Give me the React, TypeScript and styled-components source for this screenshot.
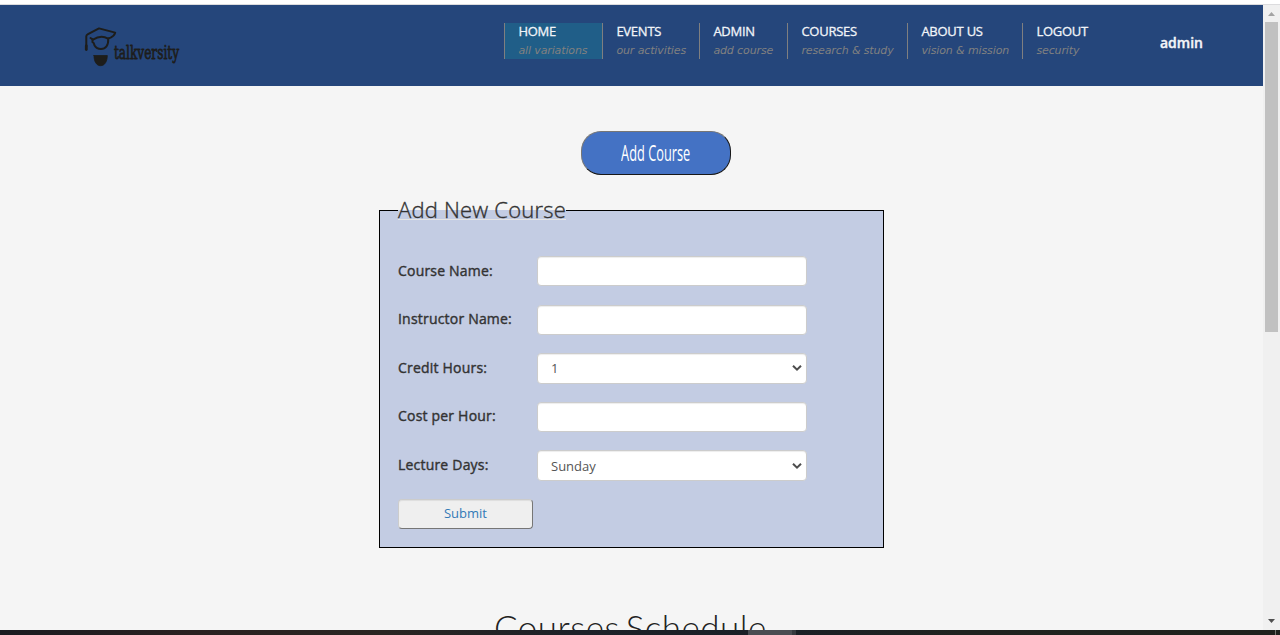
import React from "react";
import styled, { createGlobalStyle, css } from "styled-components";

const Global = createGlobalStyle`
  *, *::before, *::after { box-sizing: border-box; }
  body { margin: 0; overflow: hidden; background: #f5f5f5; font-family: "Open Sans", "Liberation Sans", sans-serif; }
`;

const Screen = styled.div`
  width: 1280px; height: 635px; overflow: hidden; display: flex; flex-direction: column;
`;
const BrowserEdge = styled.div`
  height: 5px; flex: none; background: #fff; border-bottom: 1px solid #dcdcde;
`;
const Viewport = styled.div`
  flex: none; height: 625px; display: flex; overflow: hidden;
`;
const Page = styled.div`
  width: 1263px; height: 625px; overflow: hidden; background: #f5f5f5;
`;
const Header = styled.header`
  height: 81px; background: #25467b; display: flex; align-items: flex-start; padding-left: 80px;
`;
const Logo = styled.svg`
  display: block; width: 104px; height: 50px; margin-top: 18px; flex: none; overflow: visible;
`;
const Nav = styled.nav`
  display: flex; margin: 18px 0 0 320px; height: 36px;
`;
const NavItem = styled.a<{ $width: number; $active?: boolean; $last?: boolean }>`
  width: ${(p) => p.$width}px; height: 36px; padding-left: 13px; white-space: nowrap;
  border-right: ${(p) => (p.$last ? "0" : "1px solid #7f7f80")};
  ${(p) => p.$active && css`background: #205e88; border-left: 1px solid #7f7f80;`}
`;
const NavTitle = styled.span`
  display: block; font-size: 13px; line-height: 16px; height: 18px; color: #f1f4f8;
  letter-spacing: -0.25px; -webkit-text-stroke: 0.3px #f1f4f8; padding-left: 0.4px;
`;
const NavHint = styled.span`
  display: block; font: italic 11px/18px "DejaVu Sans", sans-serif; color: #808080;
  letter-spacing: -0.12px; padding: 0.5px 0 0 0.4px;
`;
const UserName = styled.span`
  margin: 28px 0 0 38px; font-size: 14px; line-height: 20px; color: #f3f5f8; font-weight: 600;
  -webkit-text-stroke: 0.4px #f3f5f8;
`;
const Main = styled.main`
  display: flex; flex-direction: column;
`;
const AddButton = styled.button`
  width: 150px; height: 44px; margin: 45px 0 0 581px; padding: 0; border-radius: 20px;
  background: #4472c4; border: 1px solid; border-color: #767676 #171717 #171717 #767676;
  color: #fff; font: 400 18px/42px "Open Sans", sans-serif; white-space: nowrap;
  display: flex; align-items: center; justify-content: center;
`;
const Condensed = styled.span`
  display: block; flex: none; transform: scale(0.71, 1.16);
`;
const CourseForm = styled.form`
  width: 505px; height: 338px; margin: 35px 0 0 379px; border: 1px solid #000;
  background: #c3cce3; padding: 0 18px;
`;
const Legend = styled.h2`
  width: 168px; height: 24px; margin: -15px 0 0; border-bottom: 1px solid #e5e5e5;
  font-weight: 300; font-size: 22px; line-height: 26px; color: #333; white-space: nowrap;
  letter-spacing: 0.2px; -webkit-text-stroke: 0.35px #333;
  background: linear-gradient(#f5f5f5 0 14px, #c3cce3 14px);
`;
const Fields = styled.div`
  display: flex; flex-direction: column; gap: 18.2px; margin-top: 36px;
`;
const Field = styled.label`
  display: grid; grid-template-columns: 139px 270px; height: 30.4px; align-items: center;
`;
const Caption = styled.span`
  font-size: 14px; line-height: 20px; margin-top: -1.4px; color: #333; letter-spacing: 0.2px;
  -webkit-text-stroke: 0.4px #333; white-space: nowrap;
`;
const control = css`
  width: 270px; height: 30.4px; border: 1px solid #ccc; border-radius: 4px; background: #fff;
  box-shadow: inset 0 1px 1px rgba(0, 0, 0, 0.075);
`;
const TextInput = styled.input`${control} padding: 0 12px;`;
const SelectBox = styled.span`
  ${control}
  display: flex; align-items: center; justify-content: space-between; padding: 0 4px 0 13px;
  font-size: 13px; color: #555;
`;
const Submit = styled.button`
  width: 135px; height: 30px; margin-top: 18.6px; padding: 0 0 2px; border-radius: 4px;
  border: 1px solid; border-color: #ccc #767676 #767676 #ccc; background: #efefef;
  box-shadow: inset 0 1px 1px rgba(0, 0, 0, 0.075);
  color: #337ab7; font: 13px/20px "Open Sans", sans-serif;
`;
const Schedule = styled.h1`
  margin: 58px 0 0 494px; font: 300 35px/42px Lato, sans-serif; color: #222;
  letter-spacing: 0.5px; word-spacing: -4px; white-space: nowrap;
`;
const ScrollTrack = styled.div`
  width: 17px; height: 625px; background: #f0f0f0; display: flex; flex-direction: column; align-items: center;
`;
const ScrollThumb = styled.div`
  width: 13px; height: 310px; background: #c1c1c1; margin-left: -1px;
`;
const Arrow = styled.svg`
  display: block; width: 17px; height: 17px; flex: none;
`;
const Spacer = styled.div`flex: 1;`;
const Taskbar = styled.div`
  height: 5px; flex: none; display: flex; justify-content: flex-end;
  background: linear-gradient(90deg, #1a1b20 0, #2a2020 15%, #2a2522 30%, #1d2128 45%, #1a1f26 60%, #20221f 75%, #20211d 100%);
`;
const TaskTile = styled.div`width: 44px; height: 5px; background: #4a4d52;`;
const TaskEdge = styled.div`width: 4px; height: 5px; margin-right: 479px; background: #36393e;`;
const DesktopEdge = styled.div`width: 1px; height: 5px; margin-right: 4px; background: #75756f;`;

const navItems = [
  { title: "HOME", hint: "all variations", width: 99 },
  { title: "EVENTS", hint: "our activities", width: 97 },
  { title: "ADMIN", hint: "add course", width: 88 },
  { title: "COURSES", hint: "research & study", width: 120 },
  { title: "ABOUT US", hint: "vision & mission", width: 115 },
  { title: "LOGOUT", hint: "security", width: 99 },
];

const fields = [
  { label: "Course Name:" },
  { label: "Instructor Name:" },
  { label: "Credit Hours:", value: "1" },
  { label: "Cost per Hour:" },
  { label: "Lecture Days:", value: "Sunday" },
];

const Chevron = () => (
  <svg width="10" height="8" viewBox="0 0 10 8" fill="none" stroke="#4d4d4d" strokeWidth="2">
    <path d="M1 1.7 5 5.7 9 1.7" />
  </svg>
);

export default function App() {
  return (
    <Screen>
      <Global />
      <BrowserEdge />
      <Viewport>
        <Page>
          <Header>
            <Logo viewBox="80 23 104 50" fill="none" stroke="#1d1d1b" strokeWidth="2" strokeLinejoin="round" strokeLinecap="round">
              <path d="M86.3 46V36.2Q86.5 35 88 34.2L99 28.4 115.2 32.6Q114.5 35.8 110.6 37.6L108 38.6Q101 34.5 93 39.6L90.5 38" />
              <path d="M92.5 39.6V42.2C94.3 43 94 44.2 94.6 45.5 96 48 98 48.9 101 48.9 105.5 48.9 108.7 45.4 108.2 38.6" />
              <path d="M86.3 46v3.5" strokeWidth="2.8" />
              <path d="M94 55.5h13.3c0 5.5-2.4 10.2-6.7 10.2s-6.7-4.7-6.6-10.2z" fill="#1d1d1b" strokeWidth="0.8" />
              <text x="114" y="59.3" textLength="65" lengthAdjust="spacingAndGlyphs" fill="#1d1d1b" strokeWidth="0.8" fontFamily="DejaVu Serif, serif" fontSize="18.5">talkversity</text>
            </Logo>
            <Nav>
              {navItems.map((n, i) => (
                <NavItem key={n.title} $width={n.width} $active={i === 0} $last={i === navItems.length - 1}>
                  <NavTitle>{n.title}</NavTitle>
                  <NavHint>{n.hint}</NavHint>
                </NavItem>
              ))}
            </Nav>
            <UserName>admin</UserName>
          </Header>
          <Main>
            <AddButton><Condensed>Add Course</Condensed></AddButton>
            <CourseForm>
              <Legend>Add New Course</Legend>
              <Fields>
                {fields.map((f) => (
                  <Field key={f.label}>
                    <Caption>{f.label}</Caption>
                    {f.value ? <SelectBox>{f.value}<Chevron /></SelectBox> : <TextInput />}
                  </Field>
                ))}
              </Fields>
              <Submit type="button">Submit</Submit>
            </CourseForm>
            <Schedule>Courses Schedule</Schedule>
          </Main>
        </Page>
        <ScrollTrack>
          <Arrow viewBox="0 0 17 17"><path d="M5 11h7L8.5 7z" fill="#a3a3a3" /></Arrow>
          <ScrollThumb />
          <Spacer />
          <Arrow viewBox="0 0 17 17"><path d="M5 6h7l-3.5 4z" fill="#505050" /></Arrow>
        </ScrollTrack>
      </Viewport>
      <Taskbar><TaskTile /><TaskEdge /><DesktopEdge /></Taskbar>
    </Screen>
  );
}
